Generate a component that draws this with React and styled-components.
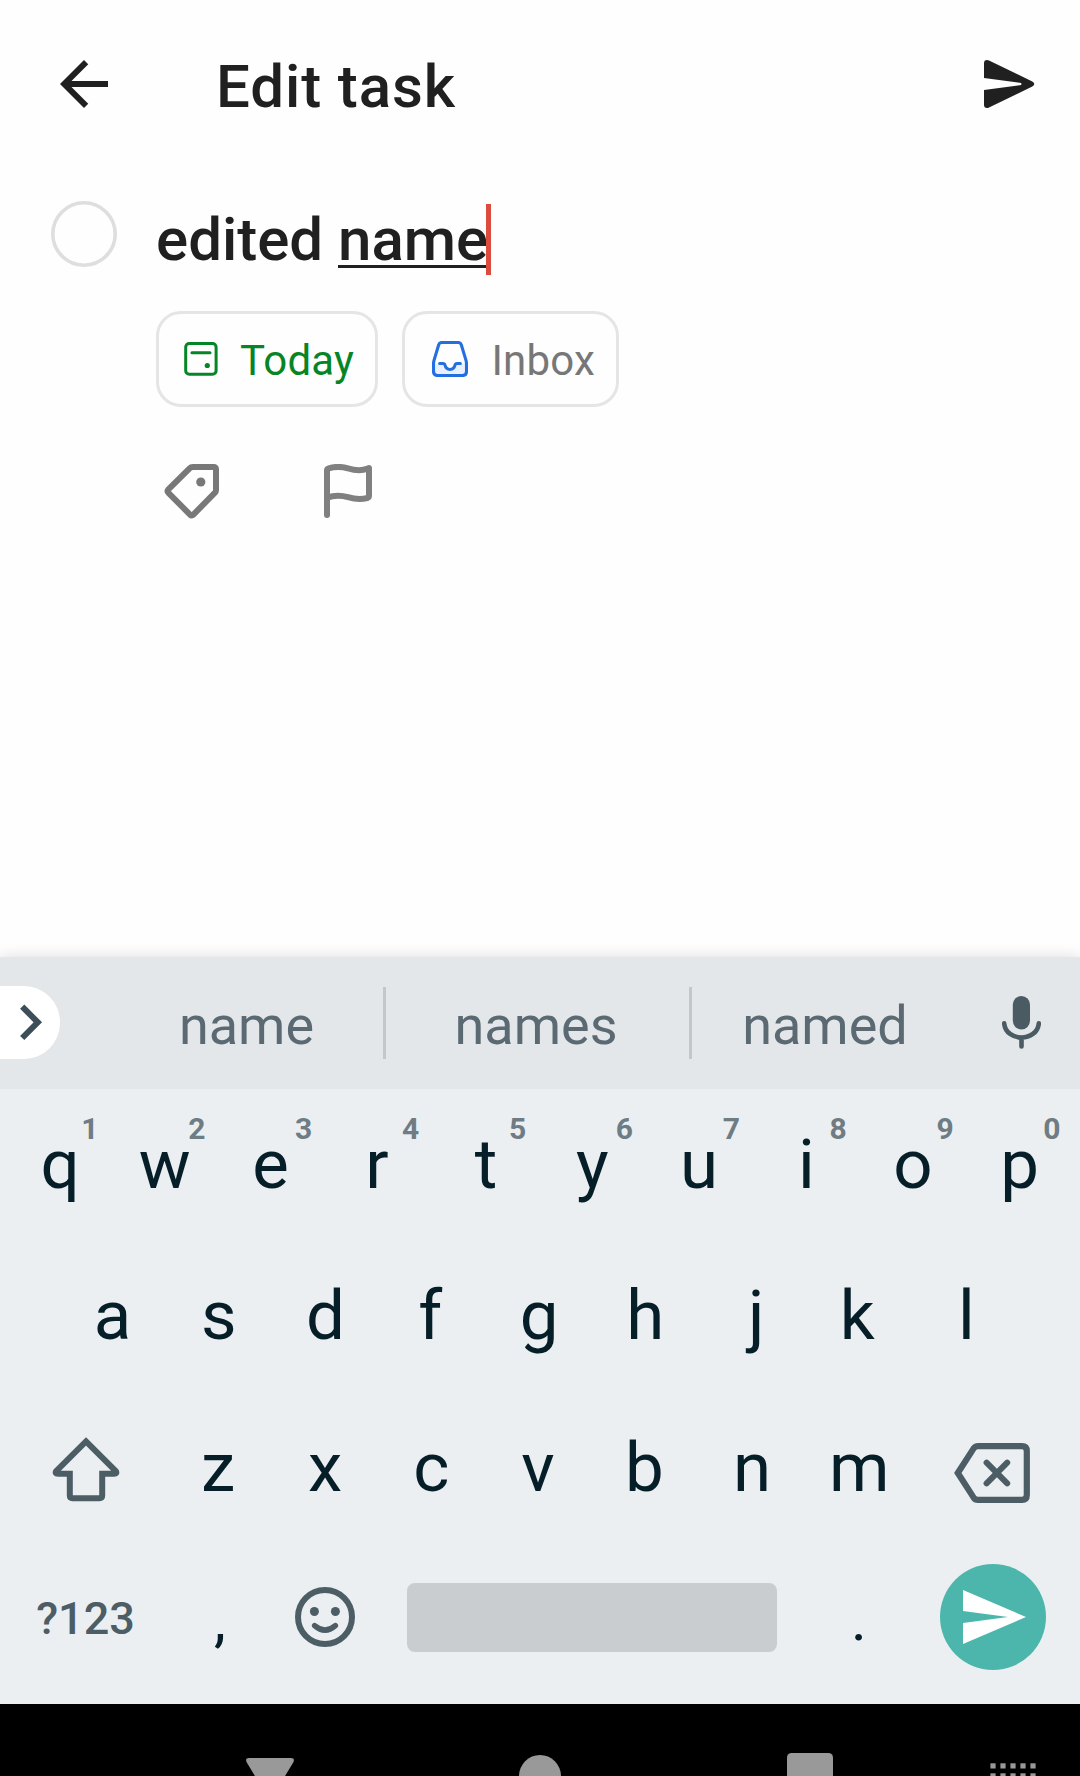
import React from "react";
import styled, { createGlobalStyle } from "styled-components";

const Global = createGlobalStyle`
  *, *::before, *::after { box-sizing: border-box; }
  html, body { margin: 0; padding: 0; background: #fefefe; }
  body { font-family: Roboto, "Liberation Sans", sans-serif; overflow: hidden; }
  svg { display: block; flex: none; }
  button { border: 0; padding: 0; background: none; font: inherit; color: inherit; }
`;

const Screen = styled.div`
  display: flex;
  flex-direction: column;
  width: 1080px;
  height: 1776px;
  overflow: hidden;
  background: #fefefe;
  color: #202020;
`;

const TopBar = styled.header`
  display: flex;
  align-items: center;
  height: 168px;
  padding: 0 45px 0 60px;
`;

const Title = styled.h1`
  flex: 1;
  margin: 5px 0 0 108px;
  font-size: 60px;
  font-weight: 500;
  line-height: 70px;
  letter-spacing: 0.9px;
`;

const Editor = styled.main`
  flex: 1;
  display: flex;
  align-items: flex-start;
  padding: 33px 51px 0;
`;

const CheckButton = styled.button`
  flex: none;
  width: 66px;
  height: 66px;
`;

const Fields = styled.div`
  flex: 1;
  margin-left: 39px;
`;

const NameField = styled.div`
  display: flex;
  align-items: center;
  height: 71px;
  margin-top: 3px;
  font-size: 60px;
  font-weight: 500;
  line-height: 71px;
  white-space: pre;
`;

const Composing = styled.span`
  height: 64px;
  line-height: 71px;
  margin-top: -7px;
  border-bottom: 3px solid #202020;
`;

const Caret = styled.span`
  flex: none;
  width: 5px;
  height: 71px;
  margin-left: -2px;
  background: #dc4c3e;
`;

const Chips = styled.div`
  display: flex;
  gap: 24px;
  margin-top: 36px;
`;

const Chip = styled.button`
  display: flex;
  align-items: center;
  width: ${(p) => p.$width}px;
  height: 96px;
  padding-left: ${(p) => p.$inset}px;
  border: 3px solid #e5e5e5;
  border-radius: 25px;
  color: ${(p) => p.$color};
  font-size: 42px;
  line-height: 50px;
`;

const ChipText = styled.span`
  margin: 3px 0 0 ${(p) => p.$gap}px;
  letter-spacing: 0.2px;
`;

const Actions = styled.div`
  display: flex;
  gap: 105px;
  padding: 57px 0 0 8px;
`;

const Keyboard = styled.section`
  height: 747px;
  background: #ebeff2;
  box-shadow: 0 0 14px rgba(0, 0, 0, 0.14);
`;

const Suggestions = styled.div`
  display: flex;
  align-items: center;
  height: 132px;
  background: #e3e7ea;
  color: #5b6a72;
`;

const Expand = styled.button`
  flex: none;
  display: flex;
  align-items: center;
  width: 60px;
  height: 73px;
  margin: 0 51px 1px 0;
  padding-left: 20px;
  border-radius: 0 36px 36px 0;
  background: #fff;
`;

const Suggestion = styled.span`
  flex: none;
  width: ${(p) => p.$width}px;
  padding: 5px ${(p) => p.$trail || 0}px 0 0;
  text-align: center;
  font-size: 54px;
  line-height: 64px;
`;

const Divider = styled.span`
  flex: none;
  width: 3px;
  height: 72px;
  background: #c2c7ca;
`;

const MicCell = styled.button`
  flex: 1;
  display: flex;
  justify-content: center;
  padding-left: 4px;
`;

const Keys = styled.div`
  display: grid;
  grid-template-rows: 151px 151px 153px 150px;
`;

const KeyRow = styled.div`
  display: flex;
  justify-content: center;
  align-items: center;
`;

const Key = styled.button`
  position: relative;
  flex: none;
  display: flex;
  align-items: center;
  justify-content: center;
  width: ${(p) => p.$width || 106.9}px;
  height: 100%;
  padding: ${(p) => p.$pad || "0"};
  color: #061e28;
  font-size: 69px;
  line-height: 81px;
`;

/* Optically centres a letter in its key. */
const Glyph = styled.span`
  transform: translateX(${(p) => p.$nudge}px);
`;

const Hint = styled.sup`
  position: absolute;
  top: 23px;
  right: 7.5px;
  width: 30px;
  text-align: center;
  color: #6f7c83;
  font-size: 30px;
  font-weight: 700;
  line-height: 34px;
`;

const BottomRow = styled(KeyRow)`
  justify-content: flex-start;
  padding-bottom: 4px;
`;

const Mode = styled.span`
  padding-top: 3px;
  color: #4c5d66;
  font-size: 45px;
  font-weight: 500;
  line-height: 54px;
`;

const Punct = styled.span`
  padding-top: 5px;
  font-size: 60px;
  line-height: 70px;
`;

const SpaceBar = styled.button`
  flex: none;
  width: 370px;
  height: 69px;
  margin: 1px 28.5px 0 26px;
  border-radius: 8px;
  background: #c9cdd0;
`;

const Enter = styled.button`
  flex: none;
  display: flex;
  align-items: center;
  width: 106px;
  height: 106px;
  margin-left: 27.6px;
  padding-left: 23px;
  border-radius: 50%;
  background: #4db6ac;
`;

const NavBar = styled.nav`
  display: flex;
  height: 72px;
  background: #000;
  color: #999;
`;

const NavSlot = styled.div`
  width: ${(p) => p.$width}px;
  padding: ${(p) => p.$top}px 0 0 ${(p) => p.$left || 0}px;
`;

const inkStroke = (width, color = "#4c5d66") => ({
  fill: "none",
  stroke: color,
  strokeWidth: width,
  strokeLinecap: "round",
  strokeLinejoin: "round",
});

const BackIcon = () => (
  <svg width="48" height="48" viewBox="4 4 16 16">
    <path fill="#202020" d="M20 11H7.83l5.59-5.59L12 4l-8 8 8 8 1.41-1.41L7.83 13H20z" />
  </svg>
);

const SubmitIcon = () => (
  <svg width="51" height="48" viewBox="0 0 51 48">
    <path
      fill="#202020"
      d="M0 3.2Q0 0 3 0Q4 0 5 .5L48.3 21.5Q50.3 22.6 50.3 24T48.3 26.5L5 47.5Q4 48 3 48Q0 48 0 44.8V30L37.3 25V23L0 18Z"
    />
  </svg>
);

const CheckIcon = () => (
  <svg width="66" height="66" viewBox="0 0 66 66">
    <circle cx="33" cy="33" r="31.2" {...inkStroke(3.6, "#dedede")} />
  </svg>
);

const TodayIcon = () => (
  <svg width="34" height="34" viewBox="0 0 34 34">
    <rect x="1.7" y="1.5" width="30.4" height="30.8" rx="3.6" {...inkStroke(3, "#058527")} />
    <path d="M7.9 10.7H26" {...inkStroke(3, "#058527")} />
    <circle cx="23.3" cy="23.5" r="2.6" fill="#058527" />
  </svg>
);

const InboxIcon = () => (
  <svg width="36" height="36" viewBox="0 0 36 36">
    <path fill="#e8f0fd" d="M1.5 22.6H12.2C13 30.6 23 30.6 23.8 22.6H34.5V31Q34 34.6 30.5 34.6H5.5Q1.5 34.6 1.5 31Z" />
    <path
      d="M9.8 1.5H26.2Q28.6 1.5 29.3 3.7L34 19.4Q34.5 21.3 34.5 23V30.5Q34.5 34.5 30.5 34.5H5.5Q1.5 34.5 1.5 30.5V23Q1.5 21.3 2 19.4L6.7 3.7Q7.4 1.5 9.8 1.5Z"
      {...inkStroke(3.1, "#246fe0")}
    />
    <path d="M7.6 22.6H11Q12.6 22.6 13 24.2C14.3 29.9 21.7 29.9 23 24.2Q23.4 22.6 25 22.6H28.4" {...inkStroke(3, "#246fe0")} />
  </svg>
);

const TagIcon = () => (
  <svg width="55" height="55" viewBox="0 0 55 55">
    <path
      d="M28.8 3H49.5Q52 3 52 5.5V26.2Q52 27.6 51 28.6L29.4 50.6Q27.7 52.4 26 50.6L4.4 28.8Q2.8 27.1 4.4 25.4L25.6 4.3Q26.9 3 28.8 3Z"
      {...inkStroke(6, "#787878")}
    />
    <circle cx="36.8" cy="18" r="4.6" fill="#787878" />
  </svg>
);

const FlagIcon = () => (
  <svg width="48" height="55" viewBox="0 0 48 55">
    <path
      d="M3 51V6.5Q3 4.8 4.7 4.3C11 2.4 18 2.6 24 4.4C31 6.5 38 6.8 43.6 4.6Q45 4 45 4V31.8Q45 33.5 43.3 34C38 35.4 31 35.3 24 33.2C18 31.4 11 30.8 3 33.6"
      {...inkStroke(6, "#808080")}
    />
  </svg>
);

const ChevronIcon = () => (
  <svg width="24" height="37" viewBox="0 0 24 37">
    <path d="M2.2 2.6L17.8 18.3L2.2 34" fill="none" stroke="#3c4e58" strokeWidth="6" />
  </svg>
);

const MicIcon = () => (
  <svg width="39" height="54" viewBox="0 0 39 54">
    <rect x="10.8" y="0" width="17.2" height="33.4" rx="8.6" fill="#4a5b64" />
    <path d="M2.2 27.4C4 46.2 35 46.2 36.8 27.4M19.5 42V50.4" {...inkStroke(4.6, "#4a5b64")} />
  </svg>
);

const ShiftIcon = () => (
  <svg width="68" height="65" viewBox="0 0 68 65">
    <path
      d="M34 4.4L63.8 34Q65.4 36.8 62 36.8H50.2V58.5Q50.2 61.2 47.5 61.2H20.5Q17.8 61.2 17.8 58.5V36.8H6Q2.6 36.8 4.2 34Z"
      {...inkStroke(6)}
      strokeLinejoin="miter"
    />
  </svg>
);

const BackspaceIcon = () => (
  <svg width="76" height="60" viewBox="0 0 76 60">
    <path
      d="M3.8 30L19.5 5.6Q21.2 3.1 24 3.1H68Q72.8 3.1 72.8 8V52Q72.8 56.9 68 56.9H24Q21.2 56.9 19.5 54.4Z"
      {...inkStroke(6.2)}
      strokeLinejoin="miter"
    />
    <path d="M32.6 19.6L53.2 40.4M53.2 19.6L32.6 40.4" {...inkStroke(6)} />
  </svg>
);

const EmojiIcon = () => (
  <svg width="60" height="60" viewBox="0 0 60 60">
    <circle cx="30" cy="30" r="27" {...inkStroke(6)} />
    <circle cx="19.4" cy="24.5" r="4.5" fill="#4c5d66" />
    <circle cx="40.4" cy="24.5" r="4.5" fill="#4c5d66" />
    <path d="M19.6 38.6Q30 47.6 40.4 38.6" {...inkStroke(5.4)} />
  </svg>
);

const EnterIcon = () => (
  <svg width="63" height="54" viewBox="0 0 63 54">
    <path fill="#fff" d="M0 0L63 27L0 54V33L45 27L0 21Z" />
  </svg>
);

const GridIcon = () => (
  <svg width="46" height="26" viewBox="0 0 46 26" fill="currentColor">
    {[0, 10, 20].map((y) =>
      [0, 10, 20, 30, 40].map((x) => <rect key={`${x}-${y}`} x={x + 0.4} y={y + 0.3} width="5.2" height="5.2" />)
    )}
  </svg>
);

const TOP = "qwertyuiop".split("");
const HOME = "asdfghjkl".split("");
const LOWER = "zxcvbnm".split("");

const NUDGE = {
  q: 1, w: -1.1, e: -2.2, r: -2.8, t: -0.6, y: -1.2, u: -1.3, i: -0.8, o: -1.1, p: -1.5,
  a: 0, s: -0.5, d: -0.8, f: -2.8, g: -0.8, h: -1.6, j: 2.4, k: -3.4, l: -1.1,
  z: -1.1, x: -1.2, c: -1.7, v: -2, b: -2.5, n: -1.8, m: -1.3,
};

const LetterKey = ({ letter, hint }) => (
  <Key>
    <Glyph $nudge={NUDGE[letter]}>{letter}</Glyph>
    {hint !== undefined && <Hint>{hint}</Hint>}
  </Key>
);

export default function App() {
  return (
    <>
      <Global />
      <Screen>
        <TopBar>
          <BackIcon />
          <Title>Edit task</Title>
          <SubmitIcon />
        </TopBar>
        <Editor>
          <CheckButton aria-label="Complete">
            <CheckIcon />
          </CheckButton>
          <Fields>
            <NameField>
              <span>edited </span>
              <Composing>name</Composing>
              <Caret />
            </NameField>
            <Chips>
              <Chip $width={222} $inset={25} $color="#058527">
                <TodayIcon />
                <ChipText $gap={22}>Today</ChipText>
              </Chip>
              <Chip $width={217} $inset={27} $color="#777777">
                <InboxIcon />
                <ChipText $gap={23.5}>Inbox</ChipText>
              </Chip>
            </Chips>
            <Actions>
              <TagIcon />
              <FlagIcon />
            </Actions>
          </Fields>
        </Editor>
        <Keyboard>
          <Suggestions>
            <Expand aria-label="Expand">
              <ChevronIcon />
            </Expand>
            <Suggestion $width={272} $trail={1}>name</Suggestion>
            <Divider />
            <Suggestion $width={303} $trail={3}>names</Suggestion>
            <Divider />
            <Suggestion $width={266}>named</Suggestion>
            <MicCell aria-label="Voice">
              <MicIcon />
            </MicCell>
          </Suggestions>
          <Keys>
            <KeyRow>
              {TOP.map((k, i) => (
                <LetterKey key={k} letter={k} hint={(i + 1) % 10} />
              ))}
            </KeyRow>
            <KeyRow>
              {HOME.map((k) => (
                <LetterKey key={k} letter={k} />
              ))}
            </KeyRow>
            <KeyRow>
              <Key $width={160.5} $pad="4px 0 0" aria-label="Shift">
                <ShiftIcon />
              </Key>
              {LOWER.map((k) => (
                <LetterKey key={k} letter={k} />
              ))}
              <Key $width={160.5} $pad="11px 4px 0 0" aria-label="Backspace">
                <BackspaceIcon />
              </Key>
            </KeyRow>
            <BottomRow>
              <Key $width={171}>
                <Mode>?123</Mode>
              </Key>
              <Key $width={98}>
                <Punct>,</Punct>
              </Key>
              <Key $width={112} aria-label="Emoji">
                <EmojiIcon />
              </Key>
              <SpaceBar aria-label="Space" />
              <Key>
                <Punct>.</Punct>
              </Key>
              <Enter aria-label="Send">
                <EnterIcon />
              </Enter>
            </BottomRow>
          </Keys>
        </Keyboard>
        <NavBar>
          <NavSlot $width={519} $left={246} $top={54}>
            <svg width="48" height="40" viewBox="0 0 48 40">
              <path fill="currentColor" d="M3 0H45Q49 0 47.5 4L27 38Q24 42 21 38L.5 4Q-1 0 3 0Z" />
            </svg>
          </NavSlot>
          <NavSlot $width={268} $top={51}>
            <svg width="42" height="42" viewBox="0 0 42 42">
              <circle cx="21" cy="21" r="21" fill="currentColor" />
            </svg>
          </NavSlot>
          <NavSlot $width={203} $top={49}>
            <svg width="46" height="46" viewBox="0 0 46 46">
              <rect width="46" height="46" rx="4.5" fill="currentColor" />
            </svg>
          </NavSlot>
          <NavSlot $width={90} $top={59}>
            <GridIcon />
          </NavSlot>
        </NavBar>
      </Screen>
    </>
  );
}
